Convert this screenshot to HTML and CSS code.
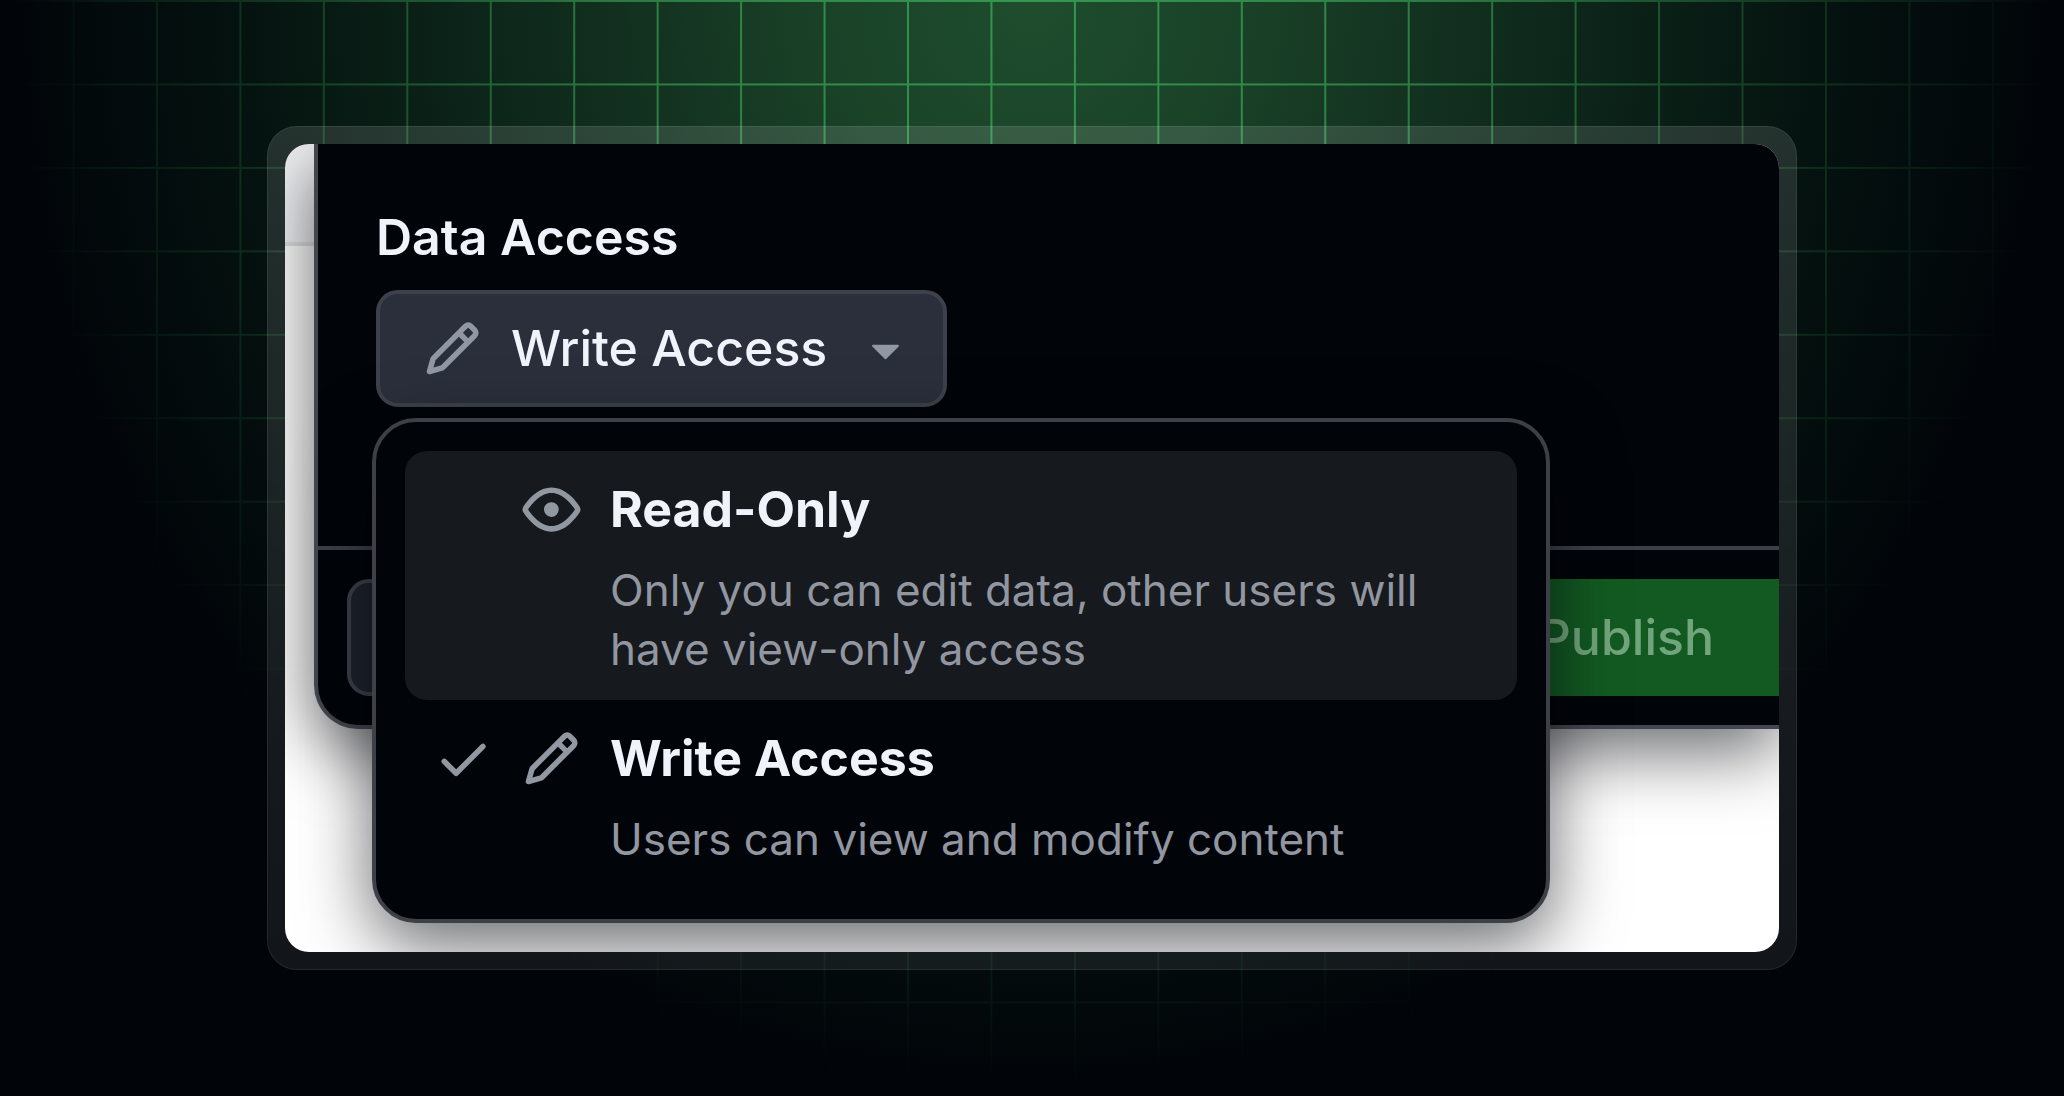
FILE: index.html
```html
<!DOCTYPE html>
<html lang="en">
<head>
  <meta charset="UTF-8">
  <meta name="viewport" content="width=device-width, initial-scale=1.0">
  <title>Data Access</title>
  <link rel="stylesheet" href="styles.css">
</head>
<body>
  <svg class="backdrop" viewBox="0 0 2064 1096" preserveAspectRatio="xMidYMin slice" aria-hidden="true">
    <defs>
      <pattern id="grid" x="72.5" y="0" width="83.45" height="83.45" patternUnits="userSpaceOnUse">
        <path d="M0 1h83.45M1 0v83.45" fill="none" stroke="#3fb95f" stroke-width="2"/>
      </pattern>
      <radialGradient id="glow" gradientUnits="userSpaceOnUse" cx="0" cy="0" r="1" gradientTransform="translate(1032 0) scale(1032 1096)">
        <stop offset="0" stop-color="#1e4d2d"/>
        <stop offset=".2" stop-color="#1a4228"/>
        <stop offset=".4" stop-color="#12301f"/>
        <stop offset=".6" stop-color="#0a2017"/>
        <stop offset=".8" stop-color="#04100e"/>
        <stop offset="1" stop-color="#010409"/>
      </radialGradient>
      <radialGradient id="fade" gradientUnits="userSpaceOnUse" cx="0" cy="0" r="1" gradientTransform="translate(1032 0) scale(1032 1096)">
        <stop offset="0" stop-color="#fff" stop-opacity=".7"/>
        <stop offset=".4" stop-color="#fff" stop-opacity=".55"/>
        <stop offset=".75" stop-color="#fff" stop-opacity=".2"/>
        <stop offset="1" stop-color="#fff" stop-opacity="0"/>
      </radialGradient>
      <mask id="gridMask">
        <rect width="2064" height="1096" fill="url(#fade)"/>
      </mask>
    </defs>
    <rect width="2064" height="1096" fill="url(#glow)"/>
    <rect width="2064" height="1096" fill="url(#grid)" mask="url(#gridMask)"/>
  </svg>

  <!-- shared icons -->
  <svg class="sprite" aria-hidden="true">
    <symbol id="pencil" viewBox="0 0 16 16">
      <path d="M11.013 1.427a1.75 1.75 0 0 1 2.474 0l1.086 1.086a1.75 1.75 0 0 1 0 2.474l-8.61 8.61c-.21.21-.47.364-.756.445l-3.251.93a.75.75 0 0 1-.927-.928l.929-3.25c.081-.286.235-.547.445-.758l8.61-8.61Zm.176 4.823L9.75 4.81l-6.286 6.287a.253.253 0 0 0-.064.108l-.558 1.953 1.953-.558a.253.253 0 0 0 .108-.064Zm1.238-3.763a.25.25 0 0 0-.354 0L10.811 3.75l1.439 1.44 1.263-1.263a.25.25 0 0 0 0-.354Z"/>
    </symbol>
    <symbol id="eye" viewBox="0 0 16 16">
      <path d="M8 2c1.981 0 3.671.992 4.933 2.078 1.27 1.091 2.187 2.345 2.637 3.023a1.62 1.62 0 0 1 0 1.798c-.45.678-1.367 1.932-2.637 3.023C11.67 13.008 9.981 14 8 14c-1.981 0-3.671-.992-4.933-2.078C1.797 10.83.88 9.576.43 8.898a1.62 1.62 0 0 1 0-1.798c.45-.677 1.367-1.931 2.637-3.022C4.33 2.992 6.019 2 8 2ZM1.679 7.932a.12.12 0 0 0 0 .136c.411.622 1.241 1.75 2.366 2.717C5.176 11.758 6.527 12.5 8 12.5c1.473 0 2.825-.742 3.955-1.715 1.124-.967 1.954-2.096 2.366-2.717a.12.12 0 0 0 0-.136c-.412-.621-1.242-1.75-2.366-2.717C10.824 4.242 9.473 3.5 8 3.5c-1.473 0-2.825.742-3.955 1.715-1.124.967-1.954 2.096-2.366 2.717ZM8 10a2 2 0 1 1-.001-3.999A2 2 0 0 1 8 10Z"/>
    </symbol>
    <symbol id="check" viewBox="0 0 16 16">
      <path d="M13.78 4.22a.75.75 0 0 1 0 1.06l-7.25 7.25a.75.75 0 0 1-1.06 0L2.22 9.28a.751.751 0 0 1 .018-1.042.751.751 0 0 1 1.042-.018L6 10.94l6.72-6.72a.75.75 0 0 1 1.06 0Z"/>
    </symbol>
    <symbol id="triangle" viewBox="0 0 16 16">
      <path d="m4.427 7.427 3.396 3.396a.25.25 0 0 0 .354 0l3.396-3.396A.25.25 0 0 0 11.396 7H4.604a.25.25 0 0 0-.177.427Z"/>
    </symbol>
  </svg>

  <main class="stage">
    <div class="frame">
      <div class="shot">
        <section class="dialog">
          <div class="dialog-body">
            <label class="label" for="access">Data Access</label>
            <div class="dropdown">
              <button class="btn btn-select" id="access" type="button" aria-haspopup="menu" aria-expanded="true">
                <svg class="icon"><use href="#pencil"/></svg>
                <span>Write Access</span>
                <svg class="icon"><use href="#triangle"/></svg>
              </button>
              <div class="menu" role="menu">
                <button class="option active" type="button" role="menuitemradio" aria-checked="false">
                  <svg class="icon icon-lead"><use href="#eye"/></svg>
                  <span class="option-title">Read-Only</span>
                  <span class="option-text">Only you can edit data, other users will have view-only access</span>
                </button>
                <button class="option" type="button" role="menuitemradio" aria-checked="true">
                  <svg class="icon icon-check"><use href="#check"/></svg>
                  <svg class="icon icon-lead"><use href="#pencil"/></svg>
                  <span class="option-title">Write Access</span>
                  <span class="option-text">Users can view and modify content</span>
                </button>
              </div>
            </div>
          </div>
          <footer class="dialog-footer">
            <button class="btn btn-cancel" type="button" aria-label="Cancel"></button>
            <button class="btn btn-publish" type="button">Publish</button>
          </footer>
        </section>
      </div>
    </div>
  </main>
</body>
</html>
```
FILE: styles.css
```css
* {
  box-sizing: border-box;
}

body {
  margin: 0;
  min-height: 100vh;
  background: #010409;
  color: #f0f3fa;
  font-family: Inter, "Liberation Sans", sans-serif;
  font-size: 50px;
  line-height: 73px;
}

button {
  font: inherit;
  color: inherit;
  cursor: pointer;
}

.backdrop {
  position: absolute;
  top: 0;
  left: 0;
  z-index: -1;
  width: 100%;
  height: 100%;
}

.sprite {
  display: none;
}

.icon {
  flex: none;
  width: 59px;
  height: 59px;
  fill: #9198a1;
}

.stage {
  display: flex;
  align-items: center;
  min-height: 100vh;
  padding: 0 267px;
}

.frame {
  flex: 1;
  padding: 17px;
  border: 1px solid rgba(255, 255, 255, 0.08);
  border-radius: 30px;
  background: linear-gradient(rgba(255, 255, 255, 0.12), rgba(255, 255, 255, 0.07)) border-box;
}

/* light page behind the dialog, with its header rule */
.shot {
  overflow: hidden;
  padding: 0 0 223px 29px;
  border-radius: 24px;
  background: linear-gradient(#f0f2f4 98px, #dfe2e1 98px, #dfe2e1 102px, #fff 102px);
}

.dialog {
  border: 4px solid #43464d;
  border-width: 0 0 4px 4px;
  border-bottom-left-radius: 44px;
  background: #010409;
  box-shadow: 0 22px 70px rgba(1, 4, 9, 0.6);
}

.dialog-body {
  padding: 57px 58px 139px;
}

.label {
  display: block;
  margin-bottom: 16px;
  font-weight: 600;
}

.btn {
  display: flex;
  align-items: center;
  height: 117px;
  border: 4px solid #3d414b;
  border-radius: 22px;
  font-weight: 500;
}

.btn-select {
  gap: 29px;
  padding: 0 28px 0 43px;
  background: #2a2f3b;
}

/* menu floats over the dialog footer */
.dropdown {
  position: relative;
}

.menu {
  position: absolute;
  top: 128px;
  left: -4px;
  z-index: 1;
  width: 1178px;
  padding: 29px;
  border: 4px solid #3d4047;
  border-radius: 44px;
  background: #010409;
  box-shadow: 0 22px 70px rgba(1, 4, 9, 0.6);
}

.option {
  display: grid;
  grid-template-columns: 59px 59px 1fr;
  column-gap: 29px;
  row-gap: 15px;
  align-items: center;
  width: 100%;
  padding: 22px 29px 21px;
  border: 0;
  border-radius: 22px;
  background: none;
  text-align: left;
}

.option.active {
  background: #16191e;
}

.icon-check {
  grid-column: 1;
}

.icon-lead {
  grid-column: 2;
}

.option-title {
  grid-column: 3;
  font-weight: 700;
}

.option-text {
  grid-column: 3;
  color: #9196a0;
  font-size: 44px;
  line-height: 59px;
}

.dialog-footer {
  display: flex;
  justify-content: space-between;
  padding: 29px 0 29px 29px;
  border-top: 4px solid #3d4047;
}

.btn-cancel {
  width: 220px;
  background: #1e232d;
}

.btn-publish {
  padding: 0 65px;
  border: 0;
  border-radius: 22px 0 0 22px;
  background: #125a22;
  color: #73a57c;
}
```
